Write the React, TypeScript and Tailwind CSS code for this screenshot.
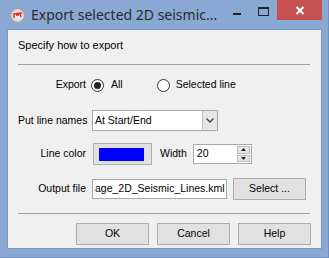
import React from 'react'

const btn =
  'flex items-center justify-center h-[22px] w-[73px] bg-[#e1e1e1] border border-[#adadad] text-[10.5px] text-black'

function Radio({ checked }: { checked?: boolean }) {
  return (
    <span className="flex items-center justify-center w-[13px] h-[13px] rounded-full border border-[#333] bg-white">
      {checked && <span className="w-[7px] h-[7px] rounded-full bg-[#222]" />}
    </span>
  )
}

function Label({ text, className = '' }: { text: string; className?: string }) {
  return <span className={'w-[68px] text-right shrink-0 whitespace-nowrap ' + className}>{text}</span>
}

export default function App() {
  return (
    <div
      className="w-[329px] h-[258px] bg-[#8aa8d4] border-r border-b border-[#6f8fbf] flex flex-col overflow-hidden"
      style={{ fontFamily: '"Liberation Sans", Arial, sans-serif' }}
    >
      {/* title bar */}
      <div className="h-[30px] flex items-start shrink-0">
        <svg className="ml-[10px] mt-[8px] shrink-0" width="15" height="15" viewBox="0 0 15 15">
          <circle cx="7.5" cy="7.5" r="7" fill="#d6d6d6" stroke="#9a9a9a" />
          <circle cx="7.5" cy="7.5" r="5" fill="#e6e6e6" />
          <path d="M3 6 L12 5 M4 6 L4 10 M10 5.5 L11 9 M6 7 L9 7" stroke="#e0262a" strokeWidth="1.4" fill="none" />
        </svg>
        <span
          className="ml-[6px] mt-[5px] text-[14px] text-[#2a2a2a] whitespace-nowrap leading-[20px]"
          style={{ fontFamily: '"Noto Sans", "Open Sans", sans-serif' }}
        >
          Export selected 2D seismic...
        </span>
        <div className="ml-auto flex items-start shrink-0">
          <span className="mt-[13px] mr-[17px] w-[8px] h-[2px] bg-[#222]" />
          <span className="mt-[7px] mr-[8px] w-[11px] h-[9px] border border-t-2 border-[#222]" />
          <span className="w-[45px] h-[20px] bg-[#c75050] flex items-center justify-center mr-[6px]">
            <svg width="10" height="9" viewBox="0 0 10 9">
              <path d="M1.5 1 L8.5 8 M8.5 1 L1.5 8" stroke="#fff" strokeWidth="2" />
            </svg>
          </span>
        </div>
      </div>

      {/* client area */}
      <div className="ml-[7px] w-[315px] h-[220px] -mt-[1px] border border-[#7b97c4] bg-[#f0f0f0] flex flex-col text-[10.5px] text-black">
        <div className="pl-[10px] mt-[8px] h-[14px] leading-[14px] text-[11px]">Specify how to export</div>
        <div className="mx-[10px] mt-[12px] h-px bg-[#a0a0a0] w-[292px]" />

        <div className="flex items-center mt-[13px] h-[14px] pl-[10px]">
          <Label text="Export" />
          <span className="ml-[5px]"><Radio checked /></span>
          <span className="ml-[7px]">All</span>
          <span className="ml-[34px]"><Radio /></span>
          <span className="ml-[6px]">Selected line</span>
        </div>

        <div className="flex items-center mt-[18px] pl-[10px]">
          <Label text="Put line names" />
          <div className="ml-[6px] w-[126px] h-[21px] border border-[#a9a9a9] bg-white flex">
            <span className="flex-1 pl-[2px] flex items-center">At Start/End</span>
            <span className="w-[15px] bg-[#e6e6e6] border-l border-[#bdbdbd] flex items-center justify-center">
              <svg width="8" height="5" viewBox="0 0 8 5">
                <path d="M0.5 0.5 L4 4 L7.5 0.5" stroke="#444" strokeWidth="1.4" fill="none" />
              </svg>
            </span>
          </div>
        </div>

        <div className="flex items-center mt-[12px] pl-[10px]">
          <Label text="Line color" />
          <div className="ml-[7px] w-[59px] h-[22px] bg-[#e1e1e1] border border-[#adadad] flex items-center pl-[5px]">
            <span className="w-[45px] h-[13px] bg-[#0000ff]" />
          </div>
          <span className="ml-[8px]">Width</span>
          <div className="ml-[6px] w-[59px] h-[20px] border border-[#a9a9a9] bg-white flex">
            <span className="flex-1 pl-[3px] flex items-center">20</span>
            <div className="w-[14px] flex flex-col gap-px py-px pr-px">
              <span className="flex-1 bg-[#e6e6e6] border border-[#bcbcbc] flex items-center justify-center">
                <svg width="5" height="3" viewBox="0 0 5 3"><path d="M0 3 L2.5 0 L5 3 Z" fill="#222" /></svg>
              </span>
              <span className="flex-1 bg-[#e6e6e6] border border-[#bcbcbc] flex items-center justify-center">
                <svg width="5" height="3" viewBox="0 0 5 3"><path d="M0 0 L2.5 3 L5 0 Z" fill="#222" /></svg>
              </span>
            </div>
          </div>
        </div>

        <div className="flex items-center mt-[13px] pl-[10px]">
          <Label text="Output file" />
          <div className="ml-[6px] w-[135px] h-[20px] border border-[#a9a9a9] bg-white flex items-center overflow-hidden pl-[2px] whitespace-nowrap">
            age_2D_Seismic_Lines.kml
          </div>
          <button className={btn + ' ml-[6px]'}>Select ...</button>
        </div>

        <div className="mx-[10px] mt-[13px] h-px bg-[#a0a0a0] w-[292px]" />

        <div className="flex mt-[9px] ml-[68px] gap-[8px]">
          <button className={btn + ' border-[#3399ff]'}>OK</button>
          <button className={btn}>Cancel</button>
          <button className={btn}>Help</button>
        </div>
      </div>
    </div>
  )
}
